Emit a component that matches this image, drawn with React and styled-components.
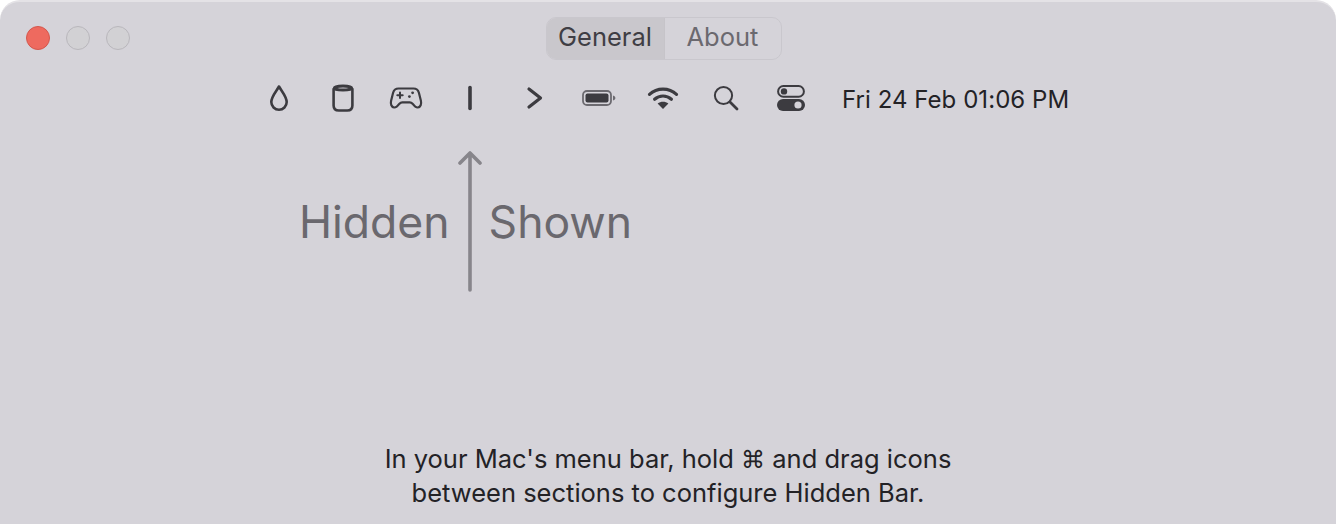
import React from "react";
import styled, { createGlobalStyle } from "styled-components";

const Global = createGlobalStyle`
  html, body { margin: 0; padding: 0; background: #fff; }
  body { font-family: Inter, "Liberation Sans", sans-serif; overflow: hidden; }
`;

const Window = styled.div`
  width: 1336px;
  height: 524px;
  box-sizing: border-box;
  background: #d5d3d9;
  border-radius: 20px 20px 0 0;
  border-top: 2px solid #e4e2e6;
  display: flex;
  flex-direction: column;
  overflow: hidden;
`;

const TitleBar = styled.div`
  display: grid;
  grid-template-columns: 1fr auto 1fr;
  align-items: center;
  margin-top: 15px;
  padding: 0 35px 0 26px;
`;

const Lights = styled.div`
  display: flex;
  gap: 16px;
  padding-bottom: 2px;
`;

const Light = styled.span`
  width: 24px;
  height: 24px;
  box-sizing: border-box;
  border-radius: 50%;
  background: ${(p) => (p.$red ? "#ee6a5f" : "#d2d1d4")};
  border: 1px solid ${(p) => (p.$red ? "#d4574d" : "#b9b7bc")};
`;

const Tabs = styled.div`
  display: flex;
  height: 43px;
  box-sizing: border-box;
  border: 1px solid #c9c7cd;
  border-radius: 10px;
  overflow: hidden;
`;

const Tab = styled.div`
  width: 117px;
  display: flex;
  align-items: center;
  justify-content: center;
  padding-bottom: 4px;
  box-sizing: border-box;
  font-size: 25.5px;
  color: ${(p) => (p.$active ? "#3f3e44" : "#6b696f")};
  background: ${(p) => (p.$active ? "#c9c7cc" : "transparent")};
  & + & {
    border-left: 1px solid #c6c4c9;
  }
`;

const MenuBar = styled.div`
  display: flex;
  align-items: center;
  height: 40px;
  margin-top: 18px;
  padding-left: 247px;
`;

const IconCell = styled.div`
  width: 64px;
  box-sizing: border-box;
  padding-right: ${(p) => p.$nudge || 0}px;
  display: flex;
  justify-content: center;
  align-items: center;
  color: #3c3b40;
`;

const Clock = styled.div`
  margin-left: 19px;
  padding-top: 2px;
  font-size: 24px;
  letter-spacing: 0.05px;
  color: #232226;
  white-space: nowrap;
`;

const Sections = styled.div`
  display: flex;
  align-items: center;
  margin-top: 32px;
  padding-left: 299px;
`;

const SectionLabel = styled.div`
  font-size: 44.5px;
  color: #6a686e;
  line-height: 54px;
`;

const Arrow = styled.svg`
  display: block;
  margin: 0 7px 0 8px;
  color: #87858b;
`;

const Help = styled.p`
  margin: 148px 0 0;
  text-align: center;
  font-size: 25.5px;
  line-height: 34px;
  color: #232226;
`;

const CmdGlyph = styled.span`
  font-family: "DejaVu Sans", sans-serif;
  font-size: 24px;
  line-height: 1;
`;

const strokeProps = {
  fill: "none",
  stroke: "currentColor",
  strokeWidth: 2.6,
  strokeLinecap: "round",
  strokeLinejoin: "round",
};

const icons = [
  {
    id: "drop",
    svg: (
      <svg width="22" height="28" viewBox="0 0 22 28" {...strokeProps}>
        <path d="M11 2.5C8.5 7 3.3 12.6 3.3 18.1a7.7 7.7 0 0 0 15.4 0C18.7 12.6 13.5 7 11 2.5Z" />
      </svg>
    ),
  },
  {
    id: "can",
    svg: (
      <svg width="24" height="28" viewBox="0 0 24 28" {...strokeProps}>
        <ellipse cx="12" cy="4" rx="8.6" ry="2" strokeWidth="3" />
        <path d="M2.6 5v16.5c0 3.2 2.2 5 5.2 5h8.4c3 0 5.2-1.8 5.2-5V5" />
      </svg>
    ),
  },
  {
    id: "pad",
    nudge: 2,
    svg: (
      <svg width="34" height="24" viewBox="0 0 34 24" fill="none">
        <path
          d="M9.5 2.5h15c3 0 4.6 1.4 5.4 4.2l2 8c.8 3.4-.4 6.6-3 6.8-2.2.2-3.8-1.6-5.4-3.8-.8-1-1.6-1.4-2.8-1.4h-7.4c-1.2 0-2 .4-2.8 1.4-1.6 2.2-3.2 4-5.4 3.8-2.6-.2-3.8-3.4-3-6.8l2-8c.8-2.8 2.4-4.2 5.4-4.2Z"
          stroke="currentColor"
          strokeWidth="2.2"
          strokeLinejoin="round"
        />
        <path d="M11 6.5v5.4M8.3 9.2h5.4" stroke="currentColor" strokeWidth="2" strokeLinecap="round" />
        <circle cx="23.6" cy="6.8" r="1.4" fill="currentColor" />
        <circle cx="20.4" cy="10.6" r="1.4" fill="currentColor" />
      </svg>
    ),
  },
  {
    id: "sep",
    nudge: 2,
    svg: (
      <svg width="6" height="26" viewBox="0 0 6 26" {...strokeProps} strokeWidth="3.6">
        <path d="M3 2.5v21" />
      </svg>
    ),
  },
  {
    id: "chev",
    svg: (
      <svg width="18" height="24" viewBox="0 0 18 24" {...strokeProps} strokeWidth="3.2">
        <path d="M3 3l11.5 9L3 21" />
      </svg>
    ),
  },
  {
    id: "batt",
    svg: (
      <svg width="34" height="16" viewBox="0 0 34 16" fill="none">
        <rect x="1" y="1" width="28" height="14" rx="4" stroke="#6c6a70" strokeWidth="1.8" />
        <rect x="3.5" y="3.5" width="23" height="9" rx="2" fill="currentColor" />
        <path d="M31 5.5c1.6.4 2.4 1.3 2.4 2.5s-.8 2.1-2.4 2.5Z" fill="#6c6a70" />
      </svg>
    ),
  },
  {
    id: "wifi",
    svg: (
      <svg width="32" height="24" viewBox="0 0 32 24" fill="none">
        <path d="M2.5 8.4C10 1.4 22 1.4 29.5 8.4" stroke="currentColor" strokeWidth="3.2" strokeLinecap="round" />
        <path d="M7.6 13.2c4.9-4.3 11.9-4.3 16.8 0" stroke="currentColor" strokeWidth="3.2" strokeLinecap="round" />
        <path d="M16 23l-5.4-5.4c3.2-2.4 7.6-2.4 10.8 0Z" fill="currentColor" />
      </svg>
    ),
  },
  {
    id: "search",
    nudge: 2,
    svg: (
      <svg width="26" height="26" viewBox="0 0 26 26" fill="none" stroke="currentColor" strokeLinecap="round">
        <circle cx="10.5" cy="10.5" r="8.6" strokeWidth="2" />
        <path d="M17 17l7 7" strokeWidth="2.8" />
      </svg>
    ),
  },
  {
    id: "toggles",
    svg: (
      <svg width="28" height="26" viewBox="0 0 28 26" fill="none">
        <rect x="1.1" y="1.1" width="25.8" height="10.6" rx="5.3" stroke="currentColor" strokeWidth="2" />
        <circle cx="7" cy="6.4" r="3.2" fill="currentColor" />
        <rect x="0" y="14" width="28" height="12" rx="6" fill="currentColor" />
        <circle cx="21" cy="20" r="3.6" fill="#d5d3d9" />
      </svg>
    ),
  },
];

export default function App() {
  return (
    <>
      <Global />
      <Window>
        <TitleBar>
          <Lights>
            <Light $red />
            <Light />
            <Light />
          </Lights>
          <Tabs>
            <Tab $active>General</Tab>
            <Tab>About</Tab>
          </Tabs>
        </TitleBar>

        <MenuBar>
          {icons.map((icon) => (
            <IconCell key={icon.id} $nudge={icon.nudge}>
              {icon.svg}
            </IconCell>
          ))}
          <Clock>Fri 24 Feb 01:06 PM</Clock>
        </MenuBar>

        <Sections>
          <SectionLabel>Hidden</SectionLabel>
          <Arrow width="24" height="144" viewBox="0 0 24 144" fill="none" stroke="currentColor" strokeWidth="3.6" strokeLinecap="round" strokeLinejoin="round">
            <path d="M12 140V3M2 13L12 3l10 10" />
          </Arrow>
          <SectionLabel>Shown</SectionLabel>
        </Sections>

        <Help>
          In your Mac's menu bar, hold <CmdGlyph>⌘</CmdGlyph> and drag icons
          <br />
          between sections to configure Hidden Bar.
        </Help>
      </Window>
    </>
  );
}
